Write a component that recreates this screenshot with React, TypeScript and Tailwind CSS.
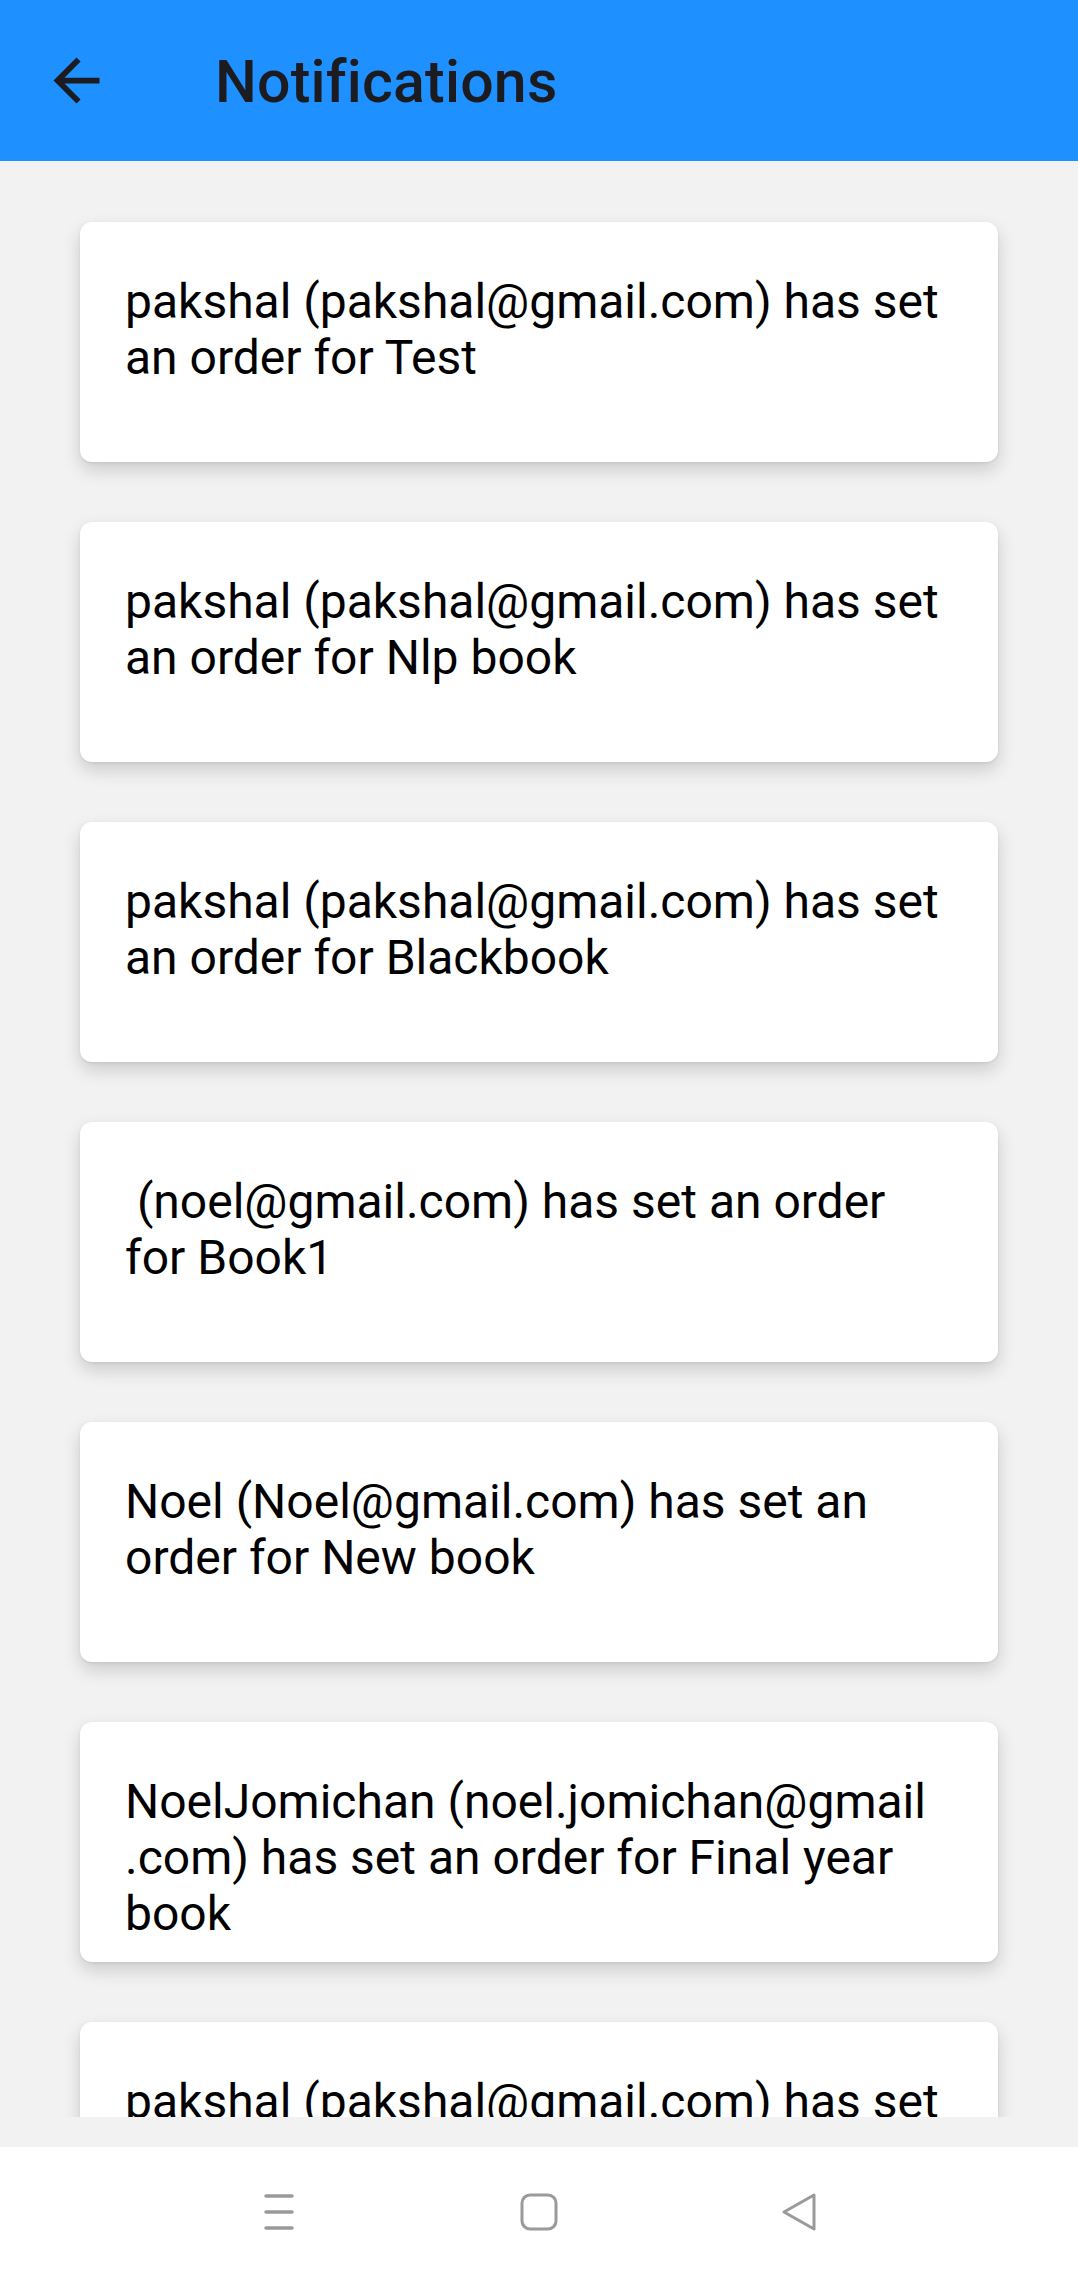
import React from "react";

const notifications: string[][] = [
  ["pakshal (pakshal@gmail.com) has set", "an order for Test"],
  ["pakshal (pakshal@gmail.com) has set", "an order for Nlp book"],
  ["pakshal (pakshal@gmail.com) has set", "an order for Blackbook"],
  ["\u00a0(noel@gmail.com) has set an order", "for Book1"],
  ["Noel (Noel@gmail.com) has set an", "order for New book"],
  ["NoelJomichan (noel.jomichan@gmail", ".com) has set an order for Final year", "book"],
  ["pakshal (pakshal@gmail.com) has set", "an order for Test"],
];

function BackArrow() {
  return (
    <svg viewBox="0 0 24 24" className="w-[69px] h-[69px]" fill="#1c1b1f">
      <path d="M20 11H7.83l5.59-5.59L12 4l-8 8 8 8 1.41-1.41L7.83 13H20v-2z" />
    </svg>
  );
}

function NotificationCard({ lines }: { lines: string[] }) {
  return (
    <div className="h-[240px] shrink-0 rounded-[12px] bg-white px-[45px] pt-[52px] shadow-[0_8px_18px_rgba(0,0,0,0.16),0_1px_3px_rgba(0,0,0,0.08)]">
      <p className="text-[48px] leading-[56px] text-black whitespace-pre">
        {lines.map((line, i) => (
          <span key={i} className="block">{line}</span>
        ))}
      </p>
    </div>
  );
}

export default function App() {
  return (
    <div className="w-[1078px] h-[2279px] flex flex-col overflow-hidden bg-[#f2f2f2] font-['Roboto',sans-serif]">
      <header className="h-[161px] shrink-0 bg-[#1e90ff] flex items-center">
        <div className="ml-[42px] flex items-center">
          <BackArrow />
        </div>
        <h1 className="ml-[104px] mt-[3px] text-[59px] font-medium text-[#1c1b1f] tracking-[0.2px]">Notifications</h1>
      </header>

      <main className="h-[1956px] shrink-0 overflow-hidden px-[80px] pt-[61px] flex flex-col gap-[60px]">
        {notifications.map((lines, i) => (
          <NotificationCard key={i} lines={lines} />
        ))}
      </main>

      <div className="h-[30px] shrink-0" />

      <nav className="flex-1 bg-white flex items-center justify-center gap-[222px] pb-[2px]">
        <svg viewBox="0 0 38 36" className="w-[38px] h-[36px]" stroke="#9a9a9a" strokeWidth="3.5" strokeLinecap="round">
          <line x1="6" y1="2" x2="32" y2="2" />
          <line x1="6" y1="18" x2="32" y2="18" />
          <line x1="6" y1="34" x2="32" y2="34" />
        </svg>
        <svg viewBox="0 0 38 38" className="w-[38px] h-[38px]" fill="none" stroke="#9a9a9a" strokeWidth="3">
          <rect x="2" y="2" width="34" height="34" rx="8" />
        </svg>
        <svg viewBox="0 0 38 38" className="w-[38px] h-[38px]" fill="none" stroke="#9a9a9a" strokeWidth="3" strokeLinejoin="round">
          <path d="M34 2 L4 19 L34 36 Z" />
        </svg>
      </nav>
    </div>
  );
}
